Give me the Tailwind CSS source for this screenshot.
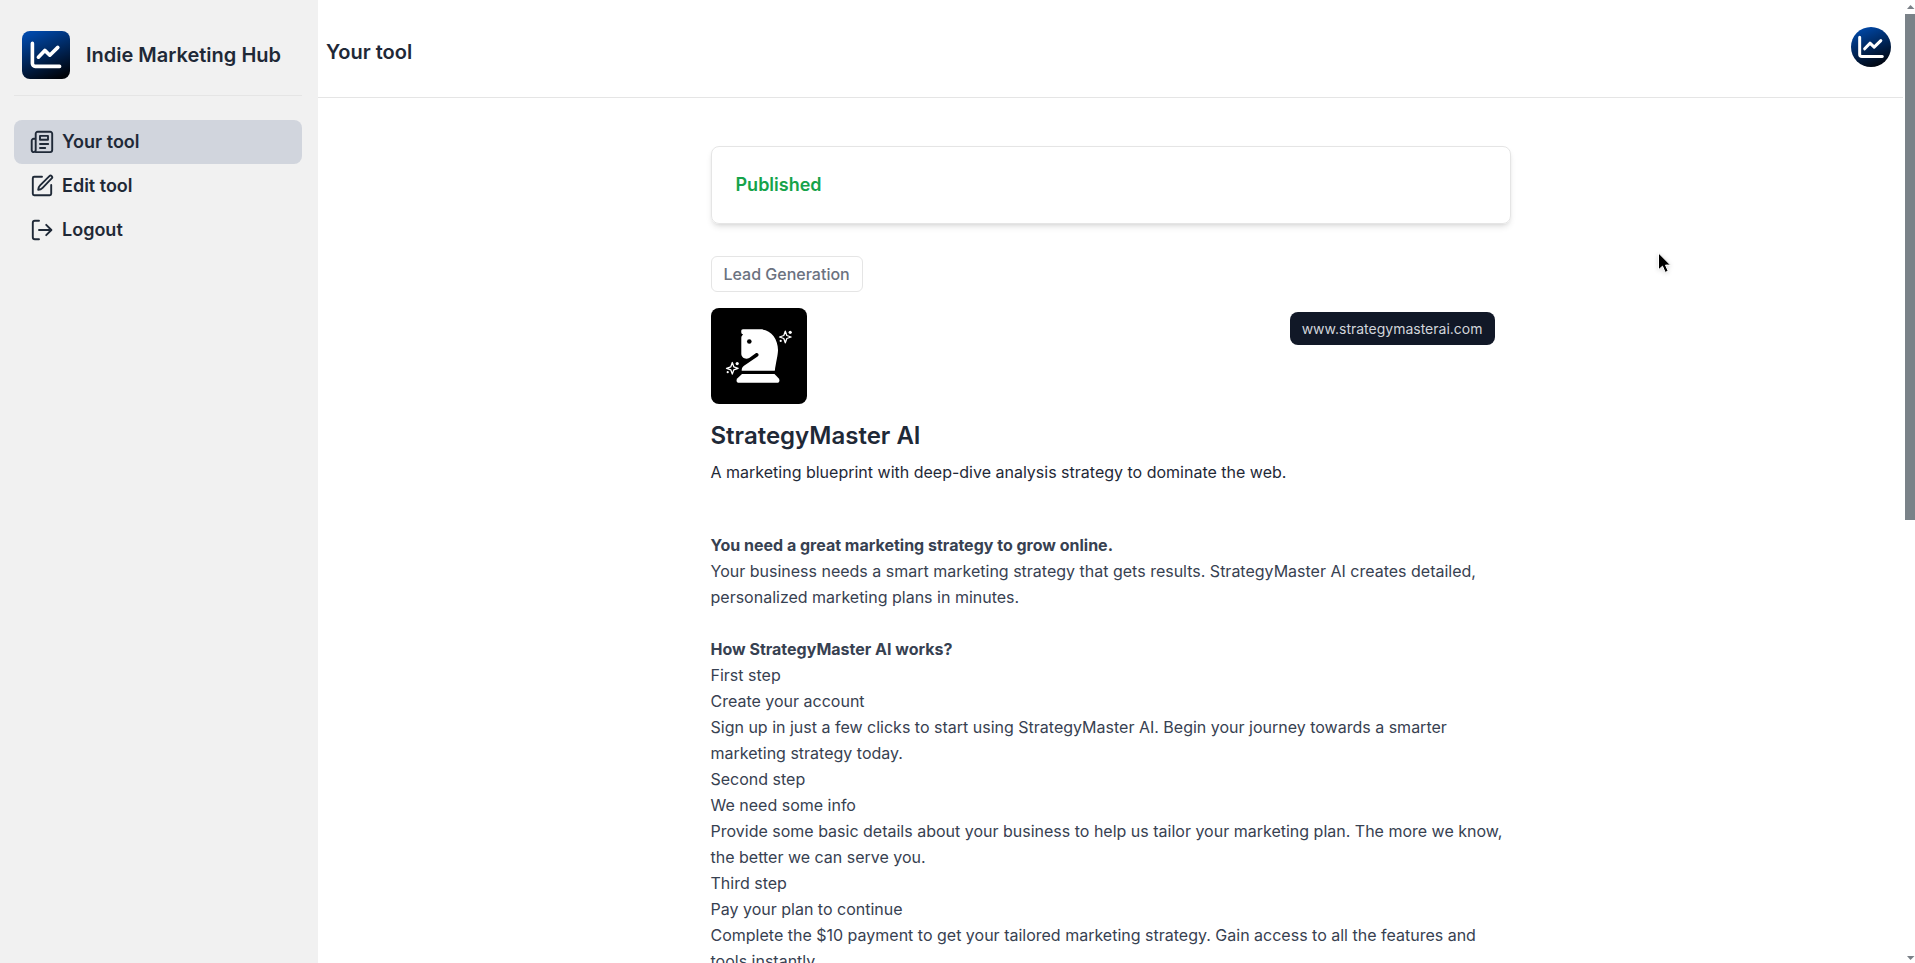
<!DOCTYPE html>
<html lang="en">
<head>
  <meta charset="UTF-8" />
  <meta name="viewport" content="width=device-width, initial-scale=1" />
  <title>Your tool - Indie Marketing Hub</title>
  <script src="https://cdn.jsdelivr.net/npm/@tailwindcss/browser@4"></script>
</head>
<body class="flex h-screen overflow-hidden bg-white font-[Inter,sans-serif] text-[#1f2937]">

  <!-- Shared logo artwork -->
  <svg class="absolute size-0" aria-hidden="true">
    <defs>
      <linearGradient id="logo-bg" x1="0.3" y1="0" x2="0.7" y2="1">
        <stop offset="0" stop-color="#0048a8" />
        <stop offset="1" stop-color="#00030a" />
      </linearGradient>
      <symbol id="logo" viewBox="0 0 48 48">
        <rect width="48" height="48" fill="url(#logo-bg)" />
        <g fill="none" stroke="#fff" stroke-width="3.6" stroke-linecap="round" stroke-linejoin="round">
          <path d="M10.4 12.400v20.200a2.800 2.800 0 0 0 2.800 2.800H37.600" />
          <path d="M16.400 26.200l6.400-6.800 5 4.800 8-7.800" />
        </g>
      </symbol>
      <symbol id="sparkle" viewBox="0 0 16 16">
        <path d="M7.800 2.200l1.500 4.300 4.300 1.500-4.300 1.500-1.500 4.300-1.500-4.300L2 8l4.300-1.500z" fill="none" stroke="#fff" stroke-width="1.300" stroke-linejoin="round" />
        <circle cx="12.700" cy="3.300" r="1.600" fill="#fff" />
        <circle cx="3.200" cy="11.900" r="1.100" fill="#fff" />
      </symbol>
    </defs>
  </svg>

  <!-- Sidebar -->
  <aside class="w-[318px] shrink-0 bg-[#f1f1f1] pl-3.5 pr-4">
    <a href="#" class="flex items-center gap-4 border-b border-[#e5e5e5] px-2 pt-[31px] pb-4">
      <svg class="size-12 rounded-lg"><use href="#logo" /></svg>
      <span class="text-xl font-semibold">Indie Marketing Hub</span>
    </a>

    <nav class="mt-6 text-lg font-semibold">
      <a href="#" class="flex h-11 items-center gap-2 rounded-lg bg-[#d1d5dd] px-4">
        <svg class="size-6" viewBox="0 0 24 24" fill="none" stroke="currentColor" stroke-width="1.9" stroke-linecap="round" stroke-linejoin="round">
          <path d="M5.700 22.100h14.500a2 2 0 0 0 2-2V3.800a2 2 0 0 0-2-2H7.700a2 2 0 0 0-2 2v16.300a2 2 0 0 1-4 0v-9.300a2 2 0 0 1 2-2h2" />
          <path d="M10 5.900h8v3.800h-8zM10 14h8.200M10 18h5.200" />
        </svg>
        <span>Your tool</span>
      </a>
      <a href="#" class="flex h-11 items-center gap-2 rounded-lg px-4">
        <svg class="size-6" viewBox="0 0 24 24" fill="none" stroke="currentColor" stroke-width="1.9" stroke-linecap="round" stroke-linejoin="round">
          <path d="M12 2.800H4.200a1.400 1.400 0 0 0-1.400 1.400v15.600a1.400 1.400 0 0 0 1.400 1.400h15.600a1.400 1.400 0 0 0 1.400-1.400V11" />
          <path d="M19.400 2.100a1.600 1.600 0 0 1 2.300 2.300L12.600 13.800c-1.200 1.200-2.500 1.900-4.400 2 0-1.900.7-3.300 1.900-4.500z" />
        </svg>
        <span>Edit tool</span>
      </a>
      <a href="#" class="flex h-11 items-center gap-2 rounded-lg px-4">
        <svg class="size-6" viewBox="0 0 24 24" fill="none" stroke="currentColor" stroke-width="1.900" stroke-linecap="round" stroke-linejoin="round">
          <path d="M9 2.800H4.800a2 2 0 0 0-2 2v14.400a2 2 0 0 0 2 2H9" />
          <path d="M9 12h12.300M16.200 6.800l5.200 5.200-5.200 5.200" />
        </svg>
        <span>Logout</span>
      </a>
    </nav>
  </aside>

  <!-- Page -->
  <div class="min-w-0 flex-1 overflow-y-auto [scrollbar-width:none]">
    <header class="flex h-[98px] items-start justify-between border-b border-[#e5e5e5] pl-2 pr-3">
      <h1 class="pt-[38px] text-xl font-semibold">Your tool</h1>
      <button type="button" aria-label="Account" class="mt-[27px] size-10 overflow-hidden rounded-full">
        <svg class="size-10"><use href="#logo" /></svg>
      </button>
    </header>

    <main class="mx-auto max-w-[800px] pt-12">
      <div class="rounded-lg border border-[#e5e5e5] p-6 shadow-md">
        <p class="text-lg font-semibold text-[#16a34a]">Published</p>
      </div>

      <div class="mt-8 flex">
        <span class="rounded-md border border-[#e5e5e5] px-3 py-[5px] font-medium text-[#6b7280]">Lead Generation</span>
      </div>

      <div class="mt-4 flex items-start justify-between pr-4">
        <svg class="size-24 rounded-lg bg-black" viewBox="0 0 96 96">
          <path fill="#fff" d="M32 21.300H49C60 21.300 67 31 67 42c0 5-2.200 13-3.200 20.700H30.700c0-2.300.6-3.600 2.300-4.900l13.600-9.200c2.300-1.800.2-4.800-2.200-3.200l-6.200 4.600c-3.600 2-7.900-.2-7.900-4.200V30c0-1.600.7-2.400 1.800-3.400l-1.400-.8c-.9-2.500-.6-4.500 1.300-4.500z" />
          <circle cx="38.300" cy="33.500" r="2.300" />
          <path fill="#fff" d="M31 66h32.500l4.300 4.400c1.200 1.600.6 4.300-1 4.300H27.200c-1.700 0-2.200-2.800-1-4.300z" />
          <use href="#sparkle" x="66.500" y="21" width="16" height="16" />
          <use href="#sparkle" x="13.500" y="52.300" width="16" height="16" />
        </svg>
        <a href="#" class="mt-1 rounded-lg bg-[#111827] px-3 py-1.5 text-sm leading-[21px] text-[#d1d5db]">www.strategymasterai.com</a>
      </div>

      <h2 class="mt-4 text-2xl font-semibold">StrategyMaster AI</h2>
      <p class="mt-2">A marketing blueprint with deep-dive analysis strategy to dominate the web.</p>

      <div class="mt-12 leading-[26px] text-[#374151]">
        <p class="font-bold">You need a great marketing strategy to grow online.</p>
        <p>Your business needs a smart marketing strategy that gets results. StrategyMaster AI creates detailed, personalized marketing plans in minutes.</p>
        <br />
        <p class="font-bold">How StrategyMaster AI works?</p>
        <p>First step</p>
        <p>Create your account</p>
        <p>Sign up in just a few clicks to start using StrategyMaster AI. Begin your journey towards a smarter marketing strategy today.</p>
        <p>Second step</p>
        <p>We need some info</p>
        <p>Provide some basic details about your business to help us tailor your marketing plan. The more we know, the better we can serve you.</p>
        <p>Third step</p>
        <p>Pay your plan to continue</p>
        <p>Complete the $10 payment to get your tailored marketing strategy. Gain access to all the features and tools instantly.</p>
      </div>
    </main>
  </div>

  <!-- Scrollbar -->
  <div class="flex w-3 shrink-0 flex-col items-end" aria-hidden="true">
    <svg class="h-3.5 w-2.5 shrink-0" viewBox="0 0 10 14"><path d="M5.500 5L9.500 9H2z" fill="#7a8087" /></svg>
    <div class="h-[506px] w-2.5 bg-[#7a8288]"></div>
    <svg class="mt-auto h-3.5 w-2.5 shrink-0" viewBox="0 0 10 14"><path d="M2 7h7.500l-4 4z" fill="#7a8087" /></svg>
  </div>

  <!-- Pointer -->
  <svg class="absolute top-[251px] left-[1657px] h-6 w-4 drop-shadow-sm" viewBox="0 0 16 24" aria-hidden="true">
    <path d="M1.500 2v16.800l4-3.600 2.700 6.200 3-1.300-2.700-6h5z" fill="#000" stroke="#fff" stroke-width="1" stroke-linejoin="round" />
  </svg>

</body>
</html>
